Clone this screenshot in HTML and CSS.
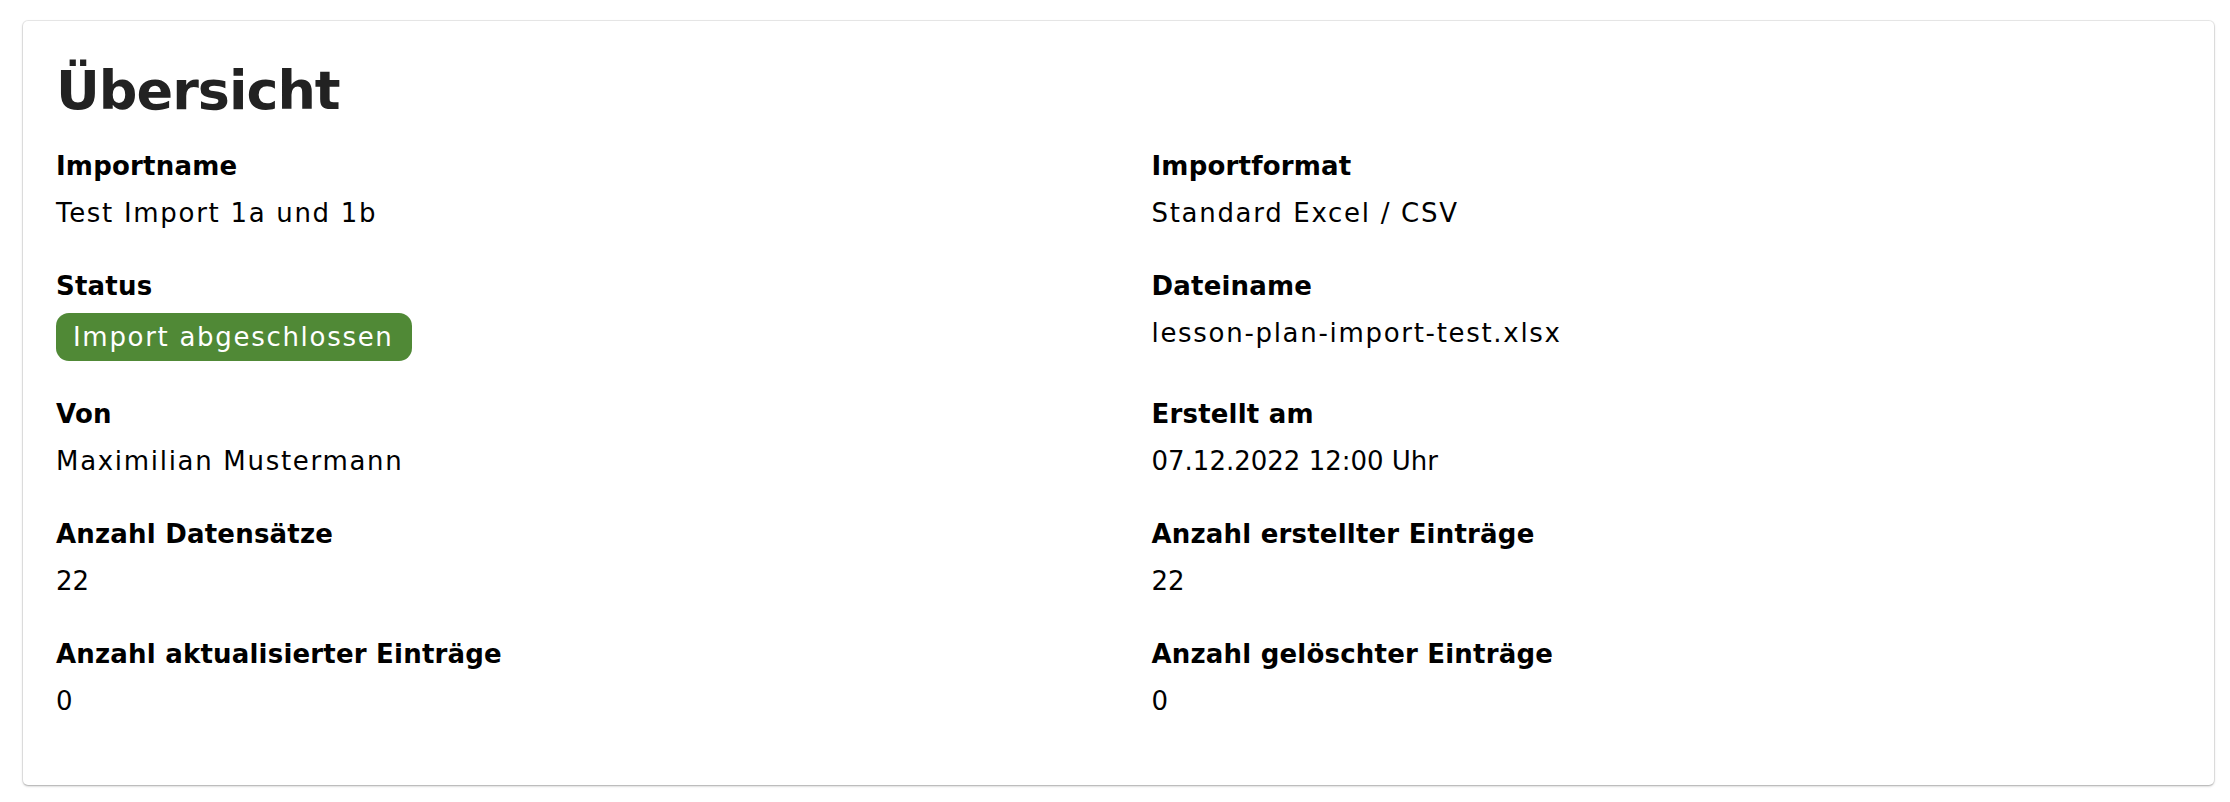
FILE: index.html
```html
<!DOCTYPE html>
<html lang="de">
<head>
<meta charset="utf-8">
<title>Übersicht</title>
<link rel="stylesheet" href="styles.css">
</head>
<body>
<main class="page">
  <section class="card">
    <h1 class="title">Übersicht</h1>
    <div class="grid">
      <div class="field">
        <div class="label">Importname</div>
        <div class="value">Test Import 1a und 1b</div>
      </div>
      <div class="field">
        <div class="label">Importformat</div>
        <div class="value">Standard Excel / CSV</div>
      </div>
      <div class="field">
        <div class="label">Status</div>
        <div class="badge">Import abgeschlossen</div>
      </div>
      <div class="field">
        <div class="label">Dateiname</div>
        <div class="value">lesson-plan-import-test.xlsx</div>
      </div>
      <div class="field">
        <div class="label">Von</div>
        <div class="value">Maximilian Mustermann</div>
      </div>
      <div class="field">
        <div class="label">Erstellt am</div>
        <div class="value num">07.12.2022 12:00 Uhr</div>
      </div>
      <div class="field">
        <div class="label">Anzahl Datensätze</div>
        <div class="value num">22</div>
      </div>
      <div class="field">
        <div class="label">Anzahl erstellter Einträge</div>
        <div class="value num">22</div>
      </div>
      <div class="field">
        <div class="label">Anzahl aktualisierter Einträge</div>
        <div class="value num">0</div>
      </div>
      <div class="field">
        <div class="label">Anzahl gelöschter Einträge</div>
        <div class="value num">0</div>
      </div>
    </div>
  </section>
</main>
</body>
</html>
```

FILE: styles.css
```css
html, body {
  margin: 0;
  padding: 0;
  background: #ffffff;
}

body {
  font-family: "DejaVu Sans", "Liberation Sans", sans-serif;
  color: #000;
}

.page {
  padding: 21px 16px 17px 23px;
}

.card {
  background: #fff;
  border-radius: 5px;
  box-shadow: 0 0 0 1px rgba(0, 0, 0, 0.08), 0 1px 3px rgba(0, 0, 0, 0.18), 0 2px 2px -1px rgba(0, 0, 0, 0.12);
  padding: 38px 34px 66px 33px;
  height: 764px;
  box-sizing: border-box;
}

.title {
  margin: 0 0 25px 0;
  font-size: 54px;
  line-height: 64px;
  font-weight: 700;
  letter-spacing: -1px;
  color: #222;
}

.grid {
  display: grid;
  grid-template-columns: 1fr 1fr;
  column-gap: 67px;
  row-gap: 37px;
}

.field {
  display: flex;
  flex-direction: column;
  align-items: flex-start;
}

.label {
  font-size: 26px;
  line-height: 36px;
  font-weight: 700;
  letter-spacing: 0.2px;
  color: #000;
}

.value {
  margin-top: 11px;
  font-size: 26px;
  line-height: 36px;
  font-weight: 400;
  letter-spacing: 1.7px;
  color: #000;
}

.value.num {
  letter-spacing: 0;
}

.badge {
  margin-top: 9px;
  margin-bottom: -2px;
  height: 48px;
  box-sizing: border-box;
  padding: 0 18px 0 17px;
  border-radius: 13px;
  background: #508936;
  color: #fff;
  font-size: 26px;
  line-height: 48px;
  letter-spacing: 1.7px;
}
```
